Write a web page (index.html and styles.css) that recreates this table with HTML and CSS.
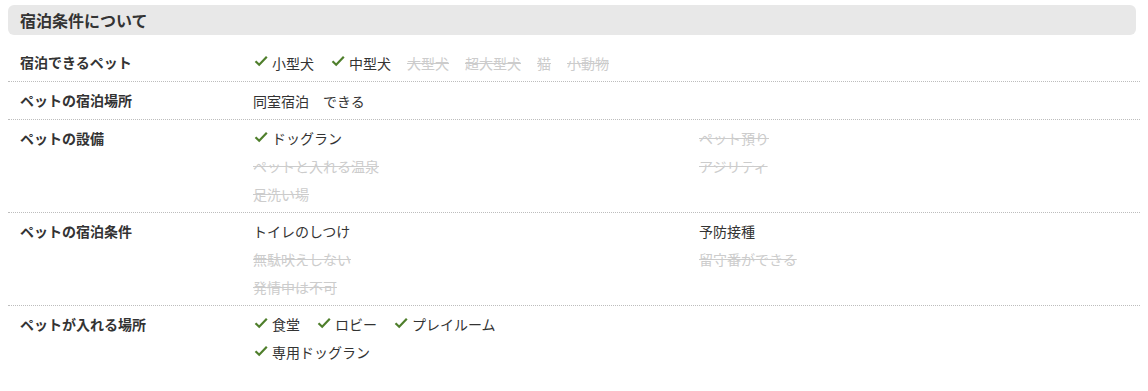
FILE: index.html
```html
<!DOCTYPE html>
<html lang="ja">
<head>
<meta charset="utf-8">
<link rel="stylesheet" href="styles.css">
</head>
<body>
<section class="conditions">
  <h2 class="heading">宿泊条件について</h2>

  <div class="row">
    <div class="label">宿泊できるペット</div>
    <div class="value inline">
      <span class="item ok"><svg class="check" viewBox="0 0 14 12"><path d="M1.5 6.2 L5.2 9.8 L12.8 1.8"/></svg>小型犬</span>
      <span class="item ok"><svg class="check" viewBox="0 0 14 12"><path d="M1.5 6.2 L5.2 9.8 L12.8 1.8"/></svg>中型犬</span>
      <span class="item off">大型犬</span>
      <span class="item off">超大型犬</span>
      <span class="item off">猫</span>
      <span class="item off">小動物</span>
    </div>
  </div>

  <div class="row">
    <div class="label">ペットの宿泊場所</div>
    <div class="value inline">
      <span class="item">同室宿泊　できる</span>
    </div>
  </div>

  <div class="row">
    <div class="label">ペットの設備</div>
    <div class="value grid">
      <span class="item ok"><svg class="check" viewBox="0 0 14 12"><path d="M1.5 6.2 L5.2 9.8 L12.8 1.8"/></svg>ドッグラン</span>
      <span class="item off">ペット預り</span>
      <span class="item off">ペットと入れる温泉</span>
      <span class="item off">アジリティ</span>
      <span class="item off">足洗い場</span>
    </div>
  </div>

  <div class="row">
    <div class="label">ペットの宿泊条件</div>
    <div class="value grid">
      <span class="item">トイレのしつけ</span>
      <span class="item">予防接種</span>
      <span class="item off">無駄吠えしない</span>
      <span class="item off">留守番ができる</span>
      <span class="item off">発情中は不可</span>
    </div>
  </div>

  <div class="row last">
    <div class="label">ペットが入れる場所</div>
    <div class="value stack">
      <div class="inline">
        <span class="item ok"><svg class="check" viewBox="0 0 14 12"><path d="M1.5 6.2 L5.2 9.8 L12.8 1.8"/></svg>食堂</span>
        <span class="item ok"><svg class="check" viewBox="0 0 14 12"><path d="M1.5 6.2 L5.2 9.8 L12.8 1.8"/></svg>ロビー</span>
        <span class="item ok"><svg class="check" viewBox="0 0 14 12"><path d="M1.5 6.2 L5.2 9.8 L12.8 1.8"/></svg>プレイルーム</span>
      </div>
      <div class="inline">
        <span class="item ok"><svg class="check" viewBox="0 0 14 12"><path d="M1.5 6.2 L5.2 9.8 L12.8 1.8"/></svg>専用ドッグラン</span>
      </div>
    </div>
  </div>
</section>
</body>
</html>
```

FILE: styles.css
```css
* { box-sizing: border-box; }

html, body {
  margin: 0;
  padding: 0;
  background: #ffffff;
}

body {
  font-family: "Noto Sans CJK JP", "Noto Sans", sans-serif;
  color: #333333;
  font-size: 14px;
}

.conditions {
  margin: 5px 0 0 8px;
  width: 1132px;
}

.heading {
  margin: 0 4px 9px 0;
  height: 30px;
  line-height: 30px;
  padding-left: 12px;
  background: #e8e8e8;
  border-radius: 6px;
  font-size: 16px;
  font-weight: bold;
  color: #333333;
}

.row {
  display: grid;
  grid-template-columns: 245px 1fr;
  padding: 4px 0;
  border-bottom: 1px dotted #bdbdbd;
}

.row.last {
  border-bottom: none;
}

.label {
  padding-left: 12px;
  font-weight: bold;
  font-size: 14px;
  line-height: 29px;
}

.value {
  line-height: 28px;
  font-size: 14px;
}

.inline {
  display: flex;
  flex-wrap: wrap;
  column-gap: 16px;
}

.grid {
  display: grid;
  grid-template-columns: 446px 1fr;
}

.stack {
  display: flex;
  flex-direction: column;
}

.item {
  display: inline-flex;
  align-items: center;
  white-space: nowrap;
}

.off {
  color: #cccccc;
  text-decoration: line-through;
}

.check {
  width: 14px;
  height: 12px;
  margin-left: 1px;
  margin-right: 4px;
  margin-top: -3px;
  flex: none;
}

.check path {
  fill: none;
  stroke: #4f7f2c;
  stroke-width: 2.2;
  stroke-linecap: butt;
  stroke-linejoin: miter;
}
```
